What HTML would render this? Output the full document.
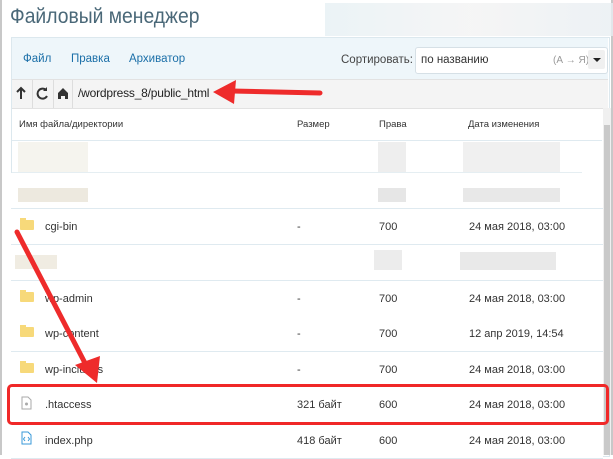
<!DOCTYPE html>
<html><head><meta charset="utf-8"><style>
body{margin:0;width:613px;height:455px;background:#fff;position:relative;overflow:hidden;font-family:"Liberation Sans",sans-serif;font-size:11px;color:#333}
.a{position:absolute}
.row{position:absolute;left:11px;width:592px;height:35px;border-bottom:1px solid #dfeaf0;background:#fff}
.row span{position:absolute;top:12px}
.fold{position:absolute;left:9px;top:11px;width:14px;height:10px;background:#f7d97a;border-radius:1px}
.fold:before{content:"";position:absolute;left:0;top:-2px;width:6px;height:3px;background:#f7d97a}
</style></head><body>
<div class="a" style="left:0;top:0;width:2px;height:455px;background:#c8c8c8"></div>
<div class="a" style="left:611px;top:0;width:2px;height:455px;background:#c8c8c8"></div>
<div class="a" style="left:10px;top:5px;font-size:21px;color:#4a6878;transform:scaleX(0.92);transform-origin:left">Файловый менеджер</div>
<div class="a" style="left:325px;top:3px;width:288px;height:33px;background:linear-gradient(90deg,#e6f0f4,#f3f3f3,#e8eef2);opacity:.8"></div>
<div class="a" style="left:11px;top:37px;width:597px;height:418px;background:#fff;border:1px solid #dce8ee"></div>
<div class="a" style="left:12px;top:38px;width:596px;height:41px;background:#eef6fa"></div>
<div class="a" style="left:23px;top:53px;color:#1b6fa8;font-size:11.5px">Файл</div>
<div class="a" style="left:71px;top:53px;color:#1b6fa8;font-size:11.5px">Правка</div>
<div class="a" style="left:129px;top:53px;color:#1b6fa8;font-size:11.5px">Архиватор</div>
<div class="a" style="left:341px;top:54px;color:#444;font-size:11.5px">Сортировать:</div>
<div class="a" style="left:415px;top:47px;width:191px;height:25px;background:#fff;border:1px solid #d6e0e6;border-radius:3px"></div>
<div class="a" style="left:421px;top:54px;font-size:11.5px;color:#333">по названию</div>
<div class="a" style="left:553px;top:55px;font-size:10px;color:#999">(А → Я)</div>
<div class="a" style="left:588px;top:50px;width:17px;height:19px;background:#f0f0f0;border-radius:2px"></div>
<div class="a" style="left:593px;top:58px;border-left:4px solid transparent;border-right:4px solid transparent;border-top:4px solid #222"></div>
<div class="a" style="left:12px;top:79px;width:596px;height:28px;background:#f4f4f4;border-top:1px solid #e2e2e2;border-bottom:1px solid #e2e2e2"></div>
<div class="a" style="left:32px;top:80px;width:1px;height:28px;background:#ddd"></div>
<div class="a" style="left:53px;top:80px;width:1px;height:28px;background:#ddd"></div>
<div class="a" style="left:72px;top:80px;width:1px;height:28px;background:#ddd"></div>
<svg class="a" style="left:16px;top:86px" width="52" height="14"><path d="M5 13V3M1 6l4-4 4 4" stroke="#333" stroke-width="2" fill="none"/><path d="M30 4a5 5 0 1 0 1 6" stroke="#333" stroke-width="2" fill="none"/><path d="M31 1v4h-4z" fill="#333"/><path d="M42 7l5-5 5 5v6h-3v-3h-4v3h-3z" fill="#333"/></svg>
<div class="a" style="left:78px;top:86px;font-size:12px;color:#222;letter-spacing:-0.2px">/wordpress_8/public_html</div>
<div class="a" style="left:12px;top:108px;width:590px;height:32px;border-bottom:1px solid #dfeaf0"></div>
<div class="a" style="left:19px;top:119px;font-size:9.5px">Имя файла/директории</div>
<div class="a" style="left:297px;top:119px;font-size:9.5px">Размер</div>
<div class="a" style="left:379px;top:119px;font-size:9.5px">Права</div>
<div class="a" style="left:468px;top:119px;font-size:9.5px">Дата изменения</div>
<div class="a" style="left:603px;top:108px;width:8px;height:347px;background:#f0f0f0"></div>
<div class="a" style="left:604px;top:125px;width:6px;height:330px;background:#c9c9c9"></div>
<div class="a" style="left:18px;top:142px;width:70px;height:30px;background:#f3f1ea;opacity:.8"></div>
<div class="a" style="left:378px;top:142px;width:28px;height:30px;background:#eee"></div>
<div class="a" style="left:463px;top:142px;width:97px;height:30px;background:#f0f0f0"></div>
<div class="a" style="left:12px;top:172px;width:570px;height:1px;background:#e5eef2"></div>
<div class="row" style="top:173px"></div>
<div class="a" style="left:18px;top:188px;width:70px;height:14px;background:#ede9df"></div>
<div class="a" style="left:378px;top:188px;width:28px;height:14px;background:#e6e6e6"></div>
<div class="a" style="left:463px;top:188px;width:97px;height:14px;background:#e8e8e8"></div>
<div class="row" style="top:209px"><div class="fold"></div><span style="left:34px">cgi-bin</span><span style="left:286px">-</span><span style="left:368px">700</span><span style="left:458px">24 мая 2018, 03:00</span></div>
<div class="row" style="top:245px"></div>
<div class="a" style="left:15px;top:255px;width:42px;height:14px;background:#f0ece2"></div>
<div class="a" style="left:374px;top:250px;width:28px;height:20px;background:#ececec"></div>
<div class="a" style="left:460px;top:252px;width:96px;height:18px;background:#e9e9e9"></div>
<div class="row" style="top:281px"><div class="fold"></div><span style="left:34px">wp-admin</span><span style="left:286px">-</span><span style="left:368px">700</span><span style="left:458px">24 мая 2018, 03:00</span></div>
<div class="row" style="top:316px"><div class="fold"></div><span style="left:34px">wp-content</span><span style="left:286px">-</span><span style="left:368px">700</span><span style="left:458px">12 апр 2019, 14:54</span></div>
<div class="row" style="top:352px"><div class="fold"></div><span style="left:34px">wp-includes</span><span style="left:286px">-</span><span style="left:368px">700</span><span style="left:458px">24 мая 2018, 03:00</span></div>
<div class="row" style="top:387px"><svg style="position:absolute;left:10px;top:9px" width="11" height="14"><path d="M1 1h6l3 3v9H1z" fill="#fff" stroke="#aaa"/><circle cx="5.5" cy="8" r="1.5" fill="#aaa"/></svg><span style="left:34px">.htaccess</span><span style="left:286px">321 байт</span><span style="left:368px">600</span><span style="left:458px">24 мая 2018, 03:00</span></div>
<div class="row" style="top:423px"><svg style="position:absolute;left:10px;top:8px" width="11" height="14"><path d="M1 1h6l3 3v9H1z" fill="#fff" stroke="#3a9ad9"/><path d="M4 6l-1.5 2 1.5 2M7 6l1.5 2-1.5 2" stroke="#3a9ad9" fill="none"/></svg><span style="left:34px">index.php</span><span style="left:286px">418 байт</span><span style="left:368px">600</span><span style="left:458px">24 мая 2018, 03:00</span></div>
<div class="a" style="left:7px;top:384px;width:596px;height:35px;border:3px solid #f02828;border-radius:5px"></div>
<svg class="a" style="left:0;top:0" width="613" height="455">
<path d="M320 93L232 91" stroke="#ee2b2b" stroke-width="5" stroke-linecap="round"/>
<path d="M213 92L236 80L234 104Z" fill="#ee2b2b"/>
<path d="M17 232L86 365" stroke="#ee2b2b" stroke-width="5" stroke-linecap="round"/>
<path d="M97 383L75 365L100 356Z" fill="#ee2b2b"/>
</svg>
</body></html>
